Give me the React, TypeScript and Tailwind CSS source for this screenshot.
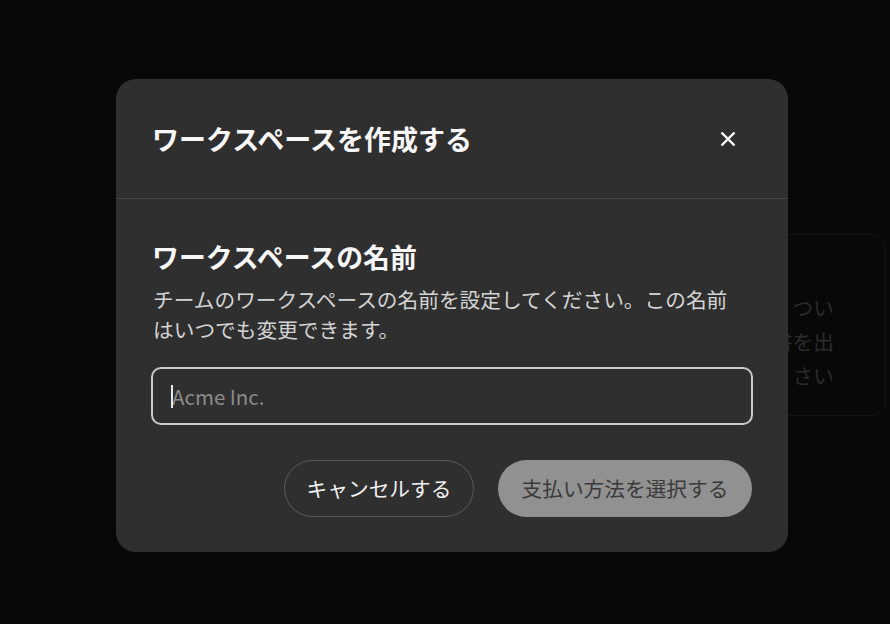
import React from "react";

const font = { fontFamily: '"Noto Sans CJK JP", "Noto Sans", sans-serif' };

function CloseIcon() {
  return (
    <svg width="16" height="16" viewBox="0 0 16 16" fill="none" aria-hidden="true">
      <path d="M1.5 1.5L14.5 14.5M14.5 1.5L1.5 14.5" stroke="#ffffff" strokeWidth="2.4" strokeLinecap="butt" />
    </svg>
  );
}

export default function App() {
  return (
    <div className="relative w-[890px] h-[624px] overflow-hidden bg-[#080808]" style={font}>
      {/* page content behind the dialog */}
      <div className="flex h-full pt-[234px] pl-[560px]">
        <div className="w-[326px] h-[182px] rounded-[14px] border border-[#141414] pr-[51px] pt-[55px] text-right text-[20.7px] leading-[34px] text-[#2b2b2b]">
          <p>つい</p>
          <p>書を出</p>
          <p>さい</p>
        </div>
      </div>

      {/* dialog */}
      <div className="absolute inset-0 pl-[116px] pt-[79px]">
        <div className="w-[672px] rounded-[20px] bg-[#2f2f2f] text-white">
          <div className="flex h-[120px] items-center justify-between border-b border-[#464646] pl-[36px] pr-[50px]">
            <h2 className="text-[27px] font-bold leading-[36px] text-[#f7f7f7]">ワークスペースを作成する</h2>
            <button className="flex h-[20px] w-[20px] items-center justify-center">
              <CloseIcon />
            </button>
          </div>

          <div className="flex flex-col px-[35px] pt-[42px] pb-[35px]">
            <h3 className="pl-[1px] text-[26.9px] font-bold leading-[32px] text-[#f7f7f7]">ワークスペースの名前</h3>
            <p className="mt-[11px] max-w-[592px] pl-[2px] text-[20.7px] leading-[30px] text-[#d4d4d4]">
              チームのワークスペースの名前を設定してください。この名前はいつでも変更できます。
            </p>
            <div className="relative mt-[23px]">
              <input
                type="text"
                placeholder="Acme Inc."
                className="h-[58px] w-[602px] rounded-[10px] border-2 border-[#cbcbcb] bg-transparent pl-[19px] text-[20.5px] text-white outline-none placeholder:text-[#8b8b8b]"
              />
              <span className="absolute left-[20px] top-[18px] h-[23px] w-[2px] bg-[#e8e8e8]" />
            </div>
            <div className="mt-[35px] flex justify-end gap-[24px] pr-[1px]">
              <button className="h-[57px] w-[190px] rounded-full border border-[#595959] text-[20.7px] text-[#f2f2f2]">
                キャンセルする
              </button>
              <button className="h-[57px] w-[254px] rounded-full bg-[#919191] text-[20.7px] text-[#3a3a3a]">
                支払い方法を選択する
              </button>
            </div>
          </div>
        </div>
      </div>
    </div>
  );
}
